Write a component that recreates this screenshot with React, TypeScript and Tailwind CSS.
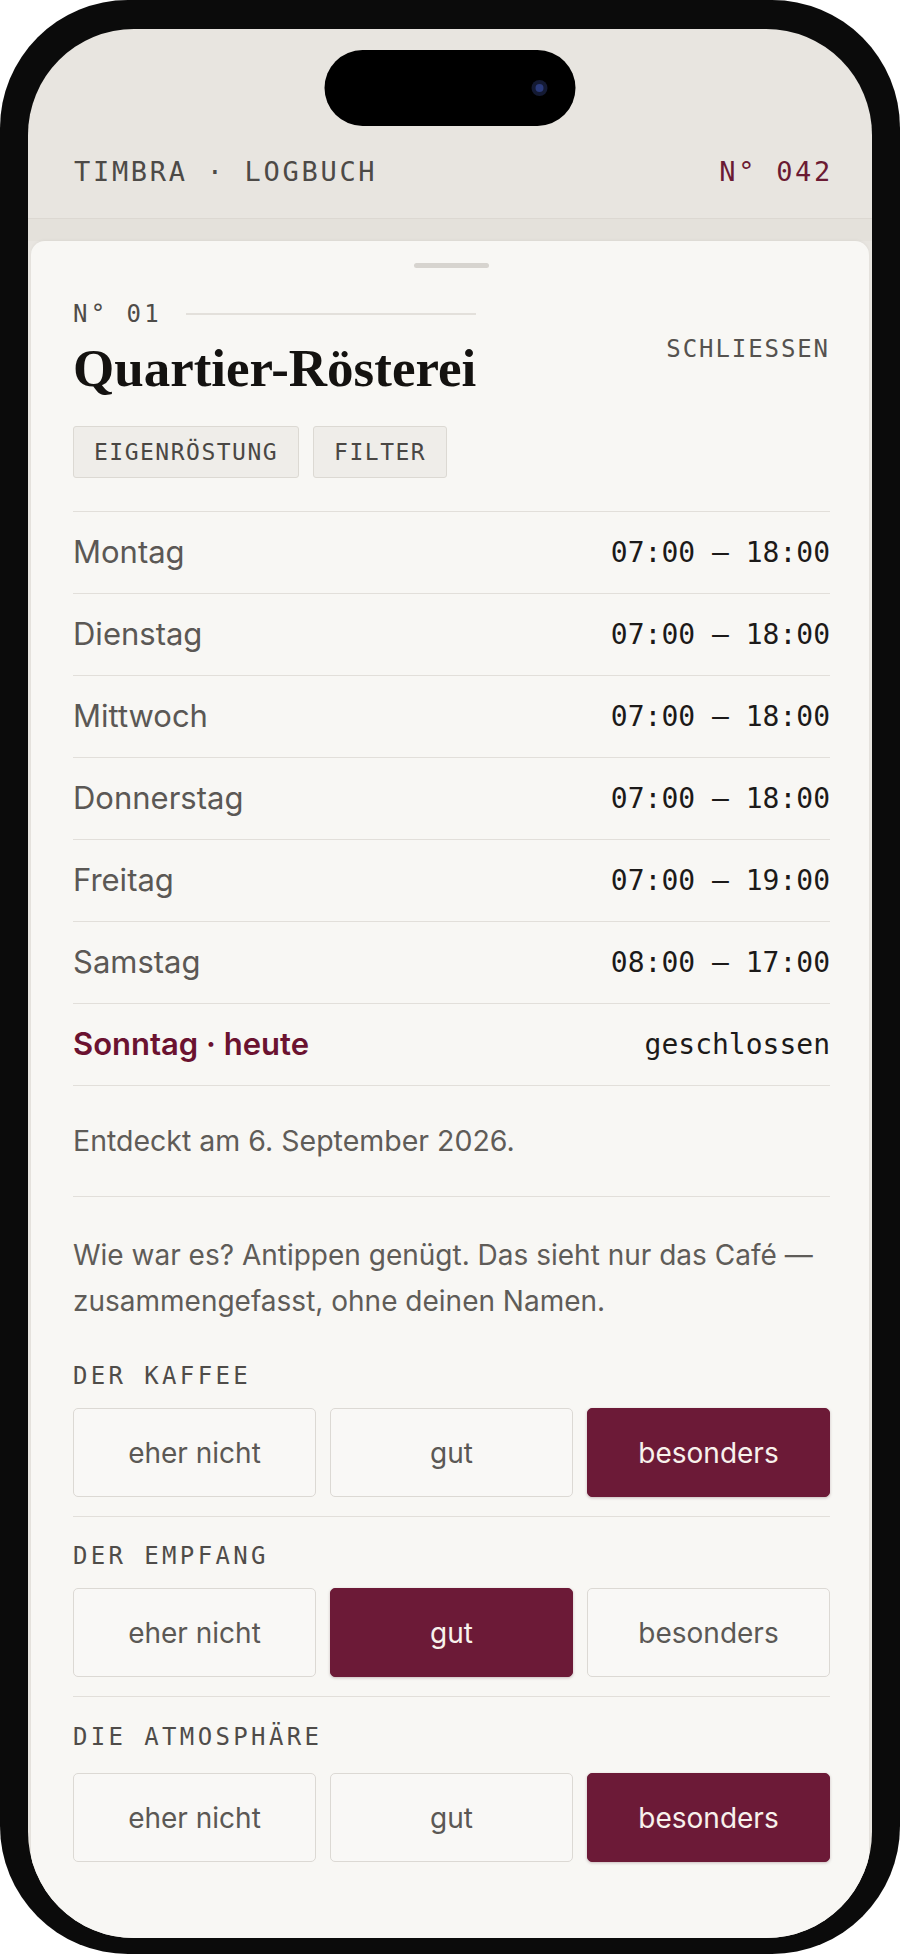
import React, { useState } from 'react';

const mono = "font-['DejaVu_Sans_Mono','Liberation_Mono',monospace]";
const sans = "font-['Inter','Noto_Sans',sans-serif]";

const hours = [
    { day: 'Montag', time: '07:00 – 18:00' },
    { day: 'Dienstag', time: '07:00 – 18:00' },
    { day: 'Mittwoch', time: '07:00 – 18:00' },
    { day: 'Donnerstag', time: '07:00 – 18:00' },
    { day: 'Freitag', time: '07:00 – 19:00' },
    { day: 'Samstag', time: '08:00 – 17:00' },
];

const options = ['eher nicht', 'gut', 'besonders'];

const RatingRow: React.FC<{ label: string; value: string; onChange: (v: string) => void; last?: boolean }> = ({ label, value, onChange, last }) => (
    <div className={last ? 'pt-[24px] pb-[18px]' : 'pt-[23px] pb-[19px] border-b border-[#e2dfda]'}>
        <div className={`${mono} text-[24px] leading-[32px] tracking-[0.14em] text-[#4f4c49]`}>{label}</div>
        <div className={`grid grid-cols-3 gap-[14px] ${last ? 'mt-[20px]' : 'mt-[16px]'}`}>
            {options.map((opt) => {
                const active = opt === value;
                return (
                    <button
                        key={opt}
                        onClick={() => onChange(opt)}
                        className={`h-[89px] rounded-[5px] border ${sans} text-[28px] ${active
                            ? 'bg-[#6c1a37] border-[#6c1a37] text-[#f8f1ec] shadow-[0_1px_3px_rgba(60,10,25,0.25)]'
                            : 'bg-[#f9f8f6] border-[#dcd9d4] text-[#5b5855]'}`}
                    >
                        {opt}
                    </button>
                );
            })}
        </div>
    </div>
);

const App: React.FC = () => {
    const [kaffee, setKaffee] = useState('besonders');
    const [empfang, setEmpfang] = useState('gut');
    const [atmo, setAtmo] = useState('besonders');

    return (
        <div className="w-[900px] h-[1954px] bg-white">
            <div className="w-full h-full bg-[#0b0b0b] rounded-[128px] pt-[29px] px-[28px] pb-[16px]">
                <div className="relative h-full rounded-[106px] overflow-hidden bg-[#e8e5e0] flex flex-col">
                    {/* dynamic island */}
                    <div className="absolute top-[21px] left-1/2 -translate-x-1/2 w-[251px] h-[76px] rounded-full bg-black">
                        <div className="absolute left-[207px] top-[30px] w-[16px] h-[16px] rounded-full bg-[#141a33]">
                            <div className="absolute left-[4px] top-[4px] w-[8px] h-[8px] rounded-full bg-[#2a3a7a]" />
                        </div>
                    </div>

                    <header className={`h-[190px] shrink-0 flex items-end justify-between pl-[46px] pr-[39px] pb-[28px] border-b border-[#dcd8d2] ${mono} text-[27px] leading-[36px] tracking-[0.1em]`}>
                        <span className="text-[#4d4a47]">TIMBRA · LOGBUCH</span>
                        <span className="text-[#6b1a33]">N° 042</span>
                    </header>

                    <div className="h-[22px] shrink-0 bg-[#e4e1db]" />

                    <div className="flex-1 mx-[3px] rounded-t-[14px] bg-[#f8f7f4] shadow-[0_-1px_3px_rgba(0,0,0,0.04)] pl-[42px] pr-[39px] pt-[22px]">
                        <div className="mx-auto w-[75px] h-[5px] rounded-full bg-[#d7d4cf]" />

                        <div className="flex justify-between items-start mt-[30px]">
                            <div className="w-fit">
                                <div className="flex items-center gap-[24px]">
                                    <span className={`${mono} text-[24px] leading-[32px] tracking-[0.14em] text-[#4f4c49]`}>N° 01</span>
                                    <div className="flex-1 h-[2px] bg-[#e3e0db]" />
                                </div>
                                <h1 className="mt-[9px] font-['Liberation_Serif','Times_New_Roman',serif] font-bold text-[53px] leading-[58px] text-[#141210]">
                                    Quartier-Rösterei
                                </h1>
                            </div>
                            <button className={`mt-[35px] ${mono} text-[24px] leading-[32px] tracking-[0.08em] text-[#55524f]`}>
                                SCHLIESSEN
                            </button>
                        </div>

                        <div className="flex gap-[14px] mt-[29px]">
                            {['EIGENRÖSTUNG', 'FILTER'].map((t) => (
                                <span key={t} className={`h-[52px] px-[20px] flex items-center rounded-[3px] border border-[#dcd9d3] bg-[#efede9] ${mono} text-[23px] tracking-[0.065em] text-[#4a4744]`}>
                                    {t}
                                </span>
                            ))}
                        </div>

                        <div className="mt-[33px] border-t border-[#e2dfda]">
                            {hours.map((h) => (
                                <div key={h.day} className="h-[82px] flex items-center justify-between border-b border-[#e2dfda]">
                                    <span className={`${sans} text-[31px] text-[#5b5855]`}>{h.day}</span>
                                    <span className={`${mono} text-[28px] text-[#1c1a19]`}>{h.time}</span>
                                </div>
                            ))}
                            <div className="h-[82px] flex items-center justify-between border-b border-[#e2dfda]">
                                <span className={`${sans} font-semibold text-[31px] text-[#6b1230]`}>Sonntag · heute</span>
                                <span className={`${mono} text-[28px] text-[#1c1a19]`}>geschlossen</span>
                            </div>
                        </div>

                        <p className={`${sans} text-[28.5px] leading-[40px] text-[#5f5c58] py-[35px] border-b border-[#e2dfda]`}>
                            Entdeckt am 6. September 2026.
                        </p>

                        <p className={`${sans} text-[28px] leading-[46px] text-[#5f5c58] pt-[35px] pb-[13px]`}>
                            Wie war es? Antippen genügt. Das sieht nur das Café — zusammengefasst, ohne deinen Namen.
                        </p>

                        <RatingRow label="DER KAFFEE" value={kaffee} onChange={setKaffee} />
                        <RatingRow label="DER EMPFANG" value={empfang} onChange={setEmpfang} />
                        <RatingRow label="DIE ATMOSPHÄRE" value={atmo} onChange={setAtmo} last />
                    </div>
                </div>
            </div>
        </div>
    );
};

export default App;
